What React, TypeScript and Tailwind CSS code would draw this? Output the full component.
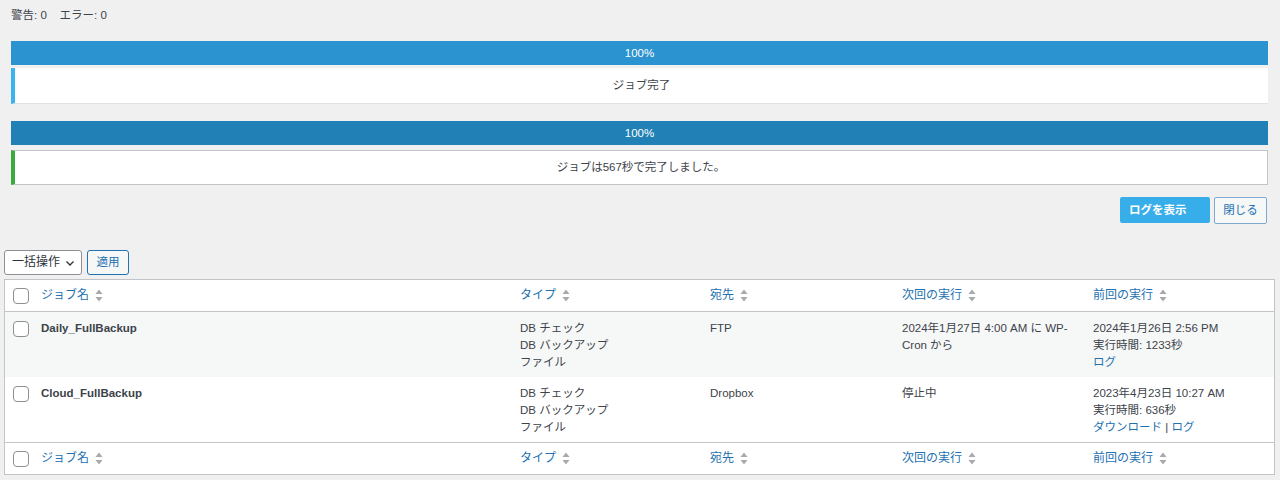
import React from "react";

const cols = "grid grid-cols-[36px_479px_190px_192px_191px_1fr]";

function SortIcon() {
  return (
    <svg width="8" height="13" viewBox="0 0 8 13" className="ml-[6px] shrink-0">
      <path d="M4 0.5 L7.5 5 L0.5 5 Z" fill="#a7aaad" />
      <path d="M4 12.5 L7.5 8 L0.5 8 Z" fill="#a7aaad" />
    </svg>
  );
}

function Checkbox() {
  return (
    <span className="ml-[8px] block h-[16px] w-[16px] rounded-[4px] border border-[#8c8f94] bg-white" />
  );
}

function HeadRow({ border }: { border: "top" | "bottom" }) {
  const labels = ["ジョブ名", "タイプ", "宛先", "次回の実行", "前回の実行"];
  return (
    <div
      className={`${cols} h-[32px] items-center ${
        border === "bottom" ? "border-b border-[#c3c4c7]" : "border-t border-[#c3c4c7]"
      }`}
    >
      <div className="flex items-center">
        <Checkbox />
      </div>
      {labels.map((l) => (
        <div key={l} className="flex items-center text-[12px] text-[#2271b1]">
          <span>{l}</span>
          <SortIcon />
        </div>
      ))}
    </div>
  );
}

const jobs = [
  {
    name: "Daily_FullBackup",
    dest: "FTP",
    next: (
      <>
        2024年1月27日 4:00 AM に WP-
        <br />
        Cron から
      </>
    ),
    last: "2024年1月26日 2:56 PM",
    time: "実行時間: 1233秒",
    links: <span className="text-[#2271b1]">ログ</span>,
    bg: "bg-[#f6f7f7]",
  },
  {
    name: "Cloud_FullBackup",
    dest: "Dropbox",
    next: <>停止中</>,
    last: "2023年4月23日 10:27 AM",
    time: "実行時間: 636秒",
    links: (
      <span className="text-[#2271b1]">
        ダウンロード <span className="text-[#3c434a]">|</span> ログ
      </span>
    ),
    bg: "bg-white",
  },
];

export default function App() {
  return (
    <div
      className="min-h-[480px] bg-[#f0f0f1] text-[11.5px] leading-[17px] text-[#3c434a]"
      style={{ fontFamily: '"Liberation Sans", "Noto Sans CJK JP", sans-serif' }}
    >
      <div className="flex flex-col pt-[8px]">
        {/* Status */}
        <div className="ml-[11px] text-[11.5px] leading-[14px] text-[#3c434a]">
          警告: 0&nbsp;&nbsp;&nbsp; エラー: 0
        </div>

        {/* Progress 1 */}
        <div className="ml-[11px] mr-[12px] mt-[19px] flex h-[24px] items-center justify-center bg-[#2a93d0] text-[11.5px] text-white">
          100%
        </div>
        <div className="ml-[11px] mr-[12px] mt-[3px] flex h-[36px] items-center justify-center border-b border-l-4 border-b-[#e2e2e2] border-l-[#39b4ee] bg-white">
          ジョブ完了
        </div>

        {/* Progress 2 */}
        <div className="ml-[11px] mr-[12px] mt-[17px] flex h-[24px] items-center justify-center bg-[#2180b6] text-[11.5px] text-white">
          100%
        </div>
        <div className="ml-[11px] mr-[12px] mt-[5px] flex h-[35px] items-center justify-center border border-l-4 border-[#c3c4c7] border-l-[#3bab3f] bg-white">
          ジョブは567秒で完了しました。
        </div>

        {/* Buttons */}
        <div className="mr-[13px] mt-[12px] flex justify-end gap-[4px]">
          <button className="h-[26px] w-[90px] rounded-[2px] bg-[#37aeea] pl-[9px] text-left text-[11.5px] font-semibold text-white">
            ログを表示
          </button>
          <button className="h-[27px] w-[53px] rounded-[2px] border border-[#7fa9cf] bg-[#f6f7f7] text-[11.5px] text-[#2271b1]">
            閉じる
          </button>
        </div>

        {/* Bulk actions */}
        <div className="ml-[4px] mt-[26px] flex gap-[5px]">
          <div className="flex h-[25px] w-[78px] items-center justify-between rounded-[3px] border border-[#8c8f94] bg-white pl-[7px] pr-[6px] text-[12px] text-[#2c3338]">
            <span>一括操作</span>
            <svg width="10" height="10" viewBox="0 0 10 10">
              <path d="M1.5 3.5 L5 7 L8.5 3.5" fill="none" stroke="#2c3338" strokeWidth="1.3" />
            </svg>
          </div>
          <button className="h-[25px] w-[42px] rounded-[3px] border border-[#2271b1] bg-[#f6f7f7] text-[11.5px] text-[#2271b1]">
            適用
          </button>
        </div>

        {/* Table */}
        <div className="ml-[4px] mr-[5px] mt-[4px] border border-[#c3c4c7] bg-white">
          <HeadRow border="bottom" />
          {jobs.map((j) => (
            <div key={j.name} className={`${cols} h-[65px] pt-[8px] ${j.bg}`}>
              <div className="pt-[1px]">
                <Checkbox />
              </div>
              <div className="font-semibold text-[#3c434a]">{j.name}</div>
              <div>
                DB チェック
                <br />
                DB バックアップ
                <br />
                ファイル
              </div>
              <div>{j.dest}</div>
              <div>{j.next}</div>
              <div>
                {j.last}
                <br />
                {j.time}
                <br />
                {j.links}
              </div>
            </div>
          ))}
          <HeadRow border="top" />
        </div>
      </div>
    </div>
  );
}
